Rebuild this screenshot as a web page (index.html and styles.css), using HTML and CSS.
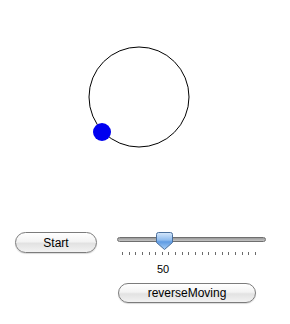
FILE: index.html
```html
<!DOCTYPE html>
<html lang="en">
<head>
    <meta charset="UTF-8">
    <title>Circle Mover</title>
    <link rel="stylesheet" href="styles.css">
</head>
<body>
    <div class="stage">
        <svg width="290" height="230" viewBox="0 0 290 230">
            <circle cx="139" cy="97" r="50" fill="none" stroke="#000" stroke-width="1"/>
            <circle cx="102" cy="132" r="9" fill="#0000f0"/>
        </svg>
    </div>

    <div class="controls">
        <button class="aqua-btn start-btn">Start</button>

        <div class="slider-col">
            <div class="slider">
                <div class="track"></div>
                <svg class="thumb" width="17" height="18" viewBox="0 0 17 18">
                    <defs>
                        <linearGradient id="thumbFill" x1="0" y1="0" x2="0" y2="1">
                            <stop offset="0" stop-color="#d6e8fb"/>
                            <stop offset="0.45" stop-color="#8ebbee"/>
                            <stop offset="0.55" stop-color="#5f9be3"/>
                            <stop offset="1" stop-color="#a9d0f7"/>
                        </linearGradient>
                    </defs>
                    <path d="M2.5 0.5 H14.5 Q16.5 0.5 16.5 2.5 V10.5 L8.5 17.5 L0.5 10.5 V2.5 Q0.5 0.5 2.5 0.5 Z" fill="url(#thumbFill)" stroke="#4a6f9c" stroke-width="1"/>
                </svg>
            </div>
            <div class="ticks">
                <span></span><span></span><span></span><span></span><span></span><span></span><span></span>
                <span></span><span></span><span></span><span></span><span></span><span></span><span></span>
                <span></span><span></span><span></span><span></span><span></span><span></span><span></span>
            </div>
            <div class="slider-label">50</div>
            <button class="aqua-btn reverse-btn">reverseMoving</button>
        </div>
    </div>
</body>
</html>
```

FILE: styles.css
```css
body {
    margin: 0;
    width: 290px;
    height: 324px;
    background: #fff;
    font-family: "Liberation Sans", Arial, sans-serif;
    overflow: hidden;
}

.stage svg {
    display: block;
}

.controls {
    display: flex;
    align-items: flex-start;
    padding-left: 15px;
}

/* Aqua style pill buttons */
.aqua-btn {
    font-family: "Liberation Sans", Arial, sans-serif;
    font-size: 12px;
    color: #000;
    padding: 0;
    border: 1px solid #7c7c7c;
    border-radius: 11px;
    background: linear-gradient(#ffffff 0%, #f3f3f3 45%, #e2e2e2 55%, #f2f2f2 100%);
    box-shadow: 0 1px 1px rgba(0, 0, 0, 0.15);
}

.start-btn {
    width: 82px;
    height: 21px;
    margin-top: 2px;
}

.slider-col {
    display: flex;
    flex-direction: column;
    width: 149px;
    margin-left: 20px;
}

.slider {
    position: relative;
    height: 22px;
}

.track {
    margin-top: 7px;
    height: 3px;
    border: 1px solid #6f6f6f;
    border-radius: 3px;
    background: linear-gradient(#9a9a9a, #c4c4c4);
}

.thumb {
    position: absolute;
    left: 39px;
    top: 2px;
}

.ticks {
    display: flex;
    justify-content: space-between;
    width: 134px;
    margin-left: 5px;
    height: 3px;
}

.ticks span {
    width: 1px;
    height: 3px;
    background: #6a6a6a;
}

.slider-label {
    margin-top: 8px;
    padding-left: 40px;
    font-size: 11px;
    line-height: 13px;
    color: #000;
}

.reverse-btn {
    width: 138px;
    height: 20px;
    margin-top: 7px;
    margin-left: 1px;
}
```
